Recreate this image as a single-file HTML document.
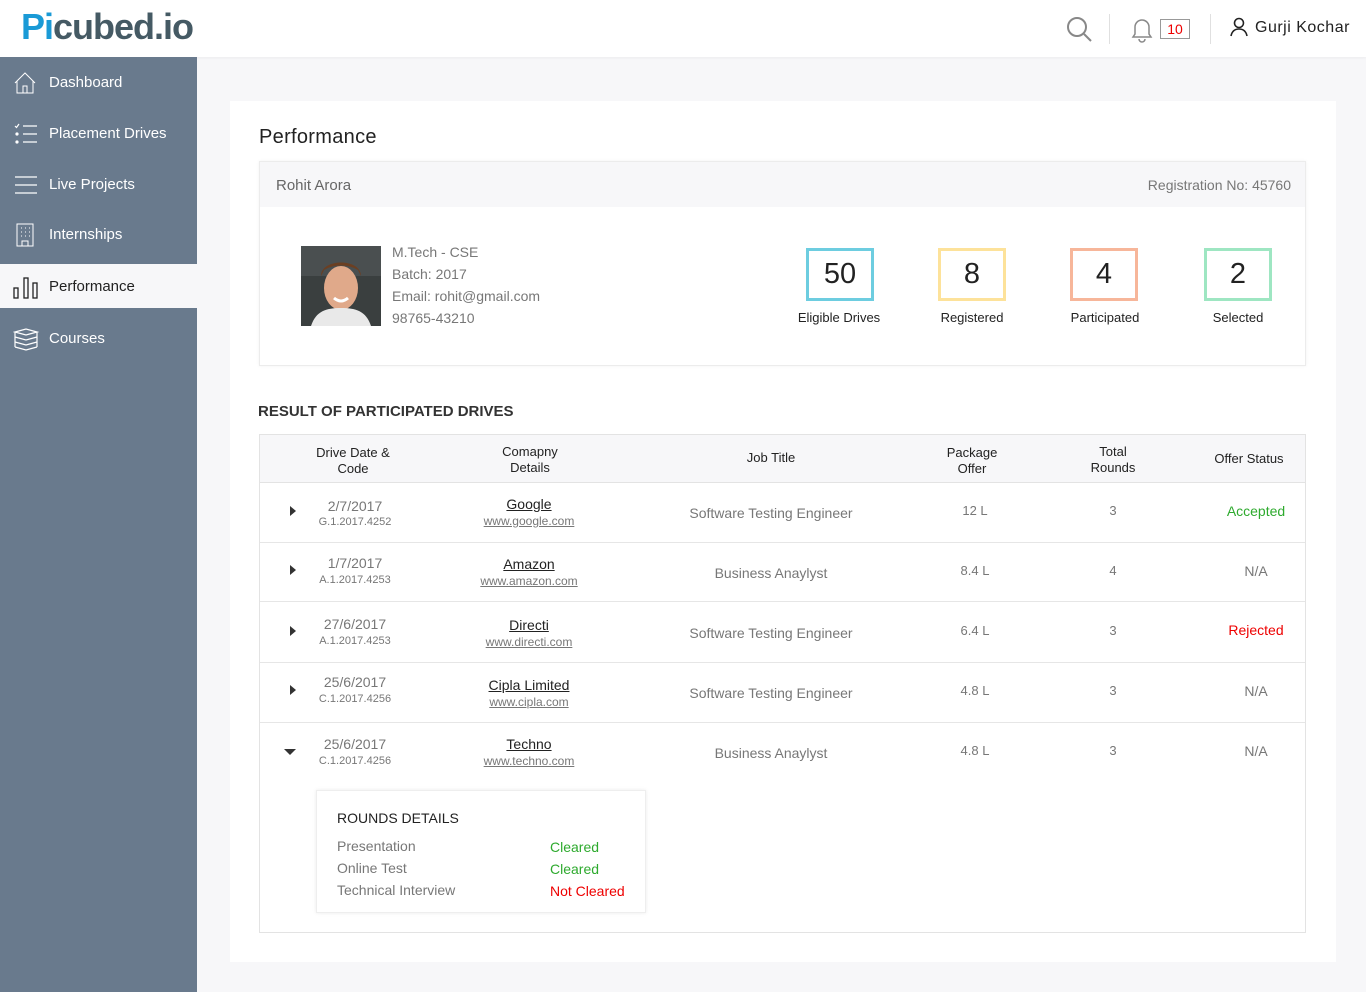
<!DOCTYPE html>
<html><head><meta charset="utf-8"><style>
*{box-sizing:border-box;margin:0;padding:0}
body{width:1366px;height:992px;background:#f7f7f9;font-family:"Liberation Sans",sans-serif;position:relative;overflow:hidden;color:#222}
.top{position:absolute;left:0;top:0;width:1366px;height:57px;background:#fff;box-shadow:0 1px 3px rgba(0,0,0,.05)}
.logo{position:absolute;left:21px;top:6px;font-size:36px;font-weight:bold;color:#455a64;letter-spacing:-1px}
.logo b{color:#1a9ad6}
.side{position:absolute;left:0;top:57px;width:197px;height:935px;background:#697a8d}
.nav{position:absolute;left:0;width:197px;height:44px;color:#fff;font-size:15px;line-height:46px;padding-left:49px}
.nav svg{position:absolute;left:13px;top:11px}
.nav.act{background:#f7f7f9;color:#222}
.card{position:absolute;left:230px;top:101px;width:1106px;height:861px;background:#fff}
.abs{position:absolute}
.stat{position:absolute;width:68px;height:53px;border:3px solid;text-align:center;font-size:29px;line-height:47px;color:#222}
.lbl{position:absolute;font-size:13px;text-align:center;width:120px}
.g{color:#777}
.tbl{position:absolute;left:259px;top:434px;width:1047px;height:499px;border:1px solid #e3e3e3}
.th{position:absolute;top:0;height:48px;width:1045px;background:#f7f7f9;border-bottom:1px solid #e3e3e3}
.c{position:absolute;text-align:center;font-size:13px}
.row{position:absolute;left:0;width:1045px;border-bottom:1px solid #e6e6e6}
.tri{position:absolute;left:30px;width:0;height:0;border-top:5px solid transparent;border-bottom:5px solid transparent;border-left:6px solid #333}
.u{text-decoration:underline}
.lk{font-size:12px !important}
</style></head><body>
<div class="top">
<div class="logo"><b>Pi</b>cubed.io</div>
<svg class="abs" style="left:1065px;top:15px" width="28" height="28" viewBox="0 0 28 28" fill="none" stroke="#888" stroke-width="2"><circle cx="12" cy="12" r="9"/><path d="M19 19l7 7"/></svg>
<div class="abs" style="left:1109px;top:14px;width:1px;height:30px;background:#e0e0e0"></div>
<svg class="abs" style="left:1129px;top:15px" width="26" height="28" viewBox="0 0 26 28" fill="none" stroke="#888" stroke-width="1.5"><path d="M4 22h18l-2-3v-7a7 7 0 00-14 0v7z"/><path d="M10 24a3 3 0 006 0"/></svg>
<div class="abs" style="left:1160px;top:19px;width:30px;height:20px;border:1px solid #999;color:#e00;font-size:14px;text-align:center;line-height:18px">10</div>
<div class="abs" style="left:1210px;top:14px;width:1px;height:30px;background:#e0e0e0"></div>
<svg class="abs" style="left:1229px;top:17px" width="20" height="20" viewBox="0 0 20 20" fill="none" stroke="#222" stroke-width="1.6"><circle cx="10" cy="6" r="4.5"/><path d="M2 19c1-5 4-7 8-7s7 2 8 7"/></svg>
<div class="abs" style="left:1255px;top:19px;font-size:16px;letter-spacing:.5px">Gurji Kochar</div>
</div>
<div class="side">
<div class="nav" style="top:3px"><svg width="24" height="24" viewBox="0 0 24 24" fill="none" stroke="#fff" stroke-width="1"><path d="M2 12L12 2l10 10M4 10v12h16V10M10 22v-7h4v7"/></svg>Dashboard</div>
<div class="nav" style="top:54px"><svg width="26" height="24" viewBox="0 0 26 24" fill="none" stroke="#fff" stroke-width="1.2"><path d="M2 4l1.5 1.5L6 2M10 4h14M10 12h14M10 20h14"/><circle cx="4" cy="12" r="1" fill="#fff"/><circle cx="4" cy="20" r="1" fill="#fff"/></svg>Placement Drives</div>
<div class="nav" style="top:105px"><svg width="26" height="24" viewBox="0 0 26 24" fill="none" stroke="#fff" stroke-width="1.2"><path d="M2 4h22M2 12h22M2 20h22"/></svg>Live Projects</div>
<div class="nav" style="top:155px"><svg width="24" height="24" viewBox="0 0 24 24" fill="none" stroke="#fff" stroke-width="1"><rect x="4" y="1" width="16" height="22"/><path d="M9 23v-5h6v5M8 5h1M12 5h1M16 5h1M8 9h1M12 9h1M16 9h1M8 13h1M12 13h1M16 13h1"/></svg>Internships</div>
<div class="nav act" style="top:207px"><svg width="26" height="24" viewBox="0 0 26 24" fill="none" stroke="#222" stroke-width="1.3"><rect x="1" y="13" width="4" height="10"/><rect x="11" y="3" width="4" height="20"/><rect x="20" y="8" width="4" height="15"/></svg>Performance</div>
<div class="nav" style="top:259px"><svg width="26" height="24" viewBox="0 0 26 24" fill="none" stroke="#fff" stroke-width="1.2"><path d="M2 5l11-3 11 3-11 3zM2 10l11 3 11-3M2 15l11 3 11-3M2 20l11 3 11-3M2 5v15M24 5v15"/></svg>Courses</div>
</div>
<div class="card"></div>
<div class="abs" style="left:259px;top:126px;font-size:20px;letter-spacing:.3px">Performance</div>
<div class="abs" style="left:259px;top:161px;width:1047px;height:205px;border:1px solid #ececec;box-shadow:0 0 3px rgba(0,0,0,.06)">
<div style="height:45px;background:#f7f7f9;position:relative">
<div class="abs g" style="left:16px;top:15px;font-size:15px;color:#666">Rohit Arora</div>
<div class="abs g" style="right:14px;top:15px;font-size:14px">Registration No: 45760</div></div>
</div>
<svg class="abs" style="left:301px;top:246px" width="80" height="80" viewBox="0 0 80 80"><rect width="80" height="80" fill="#3a3f3f"/><rect x="0" y="0" width="80" height="30" fill="#4a4f50"/><ellipse cx="40" cy="42" rx="17" ry="22" fill="#e0a98a"/><path d="M20 30c0-18 40-18 40 0l-3-6c-10-6-24-6-34 0z" fill="#6b3f22"/><path d="M10 80c5-15 15-18 30-18s25 3 30 18z" fill="#e9e9e9"/><path d="M33 52q7 6 14 0" stroke="#fff" stroke-width="3" fill="none"/></svg>
<div class="abs g" style="left:392px;top:241px;font-size:14px;line-height:22px">M.Tech - CSE<br>Batch: 2017<br>Email: rohit@gmail.com<br>98765-43210</div>
<div class="stat" style="left:806px;top:248px;border-color:#6dcde0">50</div>
<div class="stat" style="left:938px;top:248px;border-color:#fde29a">8</div>
<div class="stat" style="left:1070px;top:248px;border-color:#f7b69a">4</div>
<div class="stat" style="left:1204px;top:248px;border-color:#9ee6c2">2</div>
<div class="lbl" style="left:779px;top:310px">Eligible Drives</div>
<div class="lbl" style="left:912px;top:310px">Registered</div>
<div class="lbl" style="left:1045px;top:310px">Participated</div>
<div class="lbl" style="left:1178px;top:310px">Selected</div>
<div class="abs" style="left:258px;top:403px;font-size:15px;font-weight:bold;color:#333">RESULT OF PARTICIPATED DRIVES</div>
<div class="tbl">
<div class="th">
<div class="c" style="left:33px;width:120px;top:10px;line-height:16px">Drive Date &amp;<br>Code</div>
<div class="c" style="left:210px;width:120px;top:9px;line-height:16px">Comapny<br>Details</div>
<div class="c" style="left:411px;width:200px;top:15px">Job Title</div>
<div class="c" style="left:652px;width:120px;top:10px;line-height:16px">Package<br>Offer</div>
<div class="c" style="left:793px;width:120px;top:9px;line-height:16px">Total<br>Rounds</div>
<div class="c" style="left:929px;width:120px;top:16px">Offer Status</div>
</div>
<div class="row" style="top:48px;height:60px"><div class="tri" style="top:23px"></div>
<div class="c g" style="left:35px;width:120px;top:15px;font-size:14px">2/7/2017</div><div class="c g" style="left:35px;width:120px;top:33px;font-size:11px">G.1.2017.4252</div>
<div class="c u" style="left:209px;width:120px;top:13px;font-size:14px">Google</div><div class="c g u lk" style="left:199px;width:140px;top:31px">www.google.com</div>
<div class="c g" style="left:411px;width:200px;top:22px;font-size:14px">Software Testing Engineer</div>
<div class="c g" style="left:655px;width:120px;top:20px">12 L</div><div class="c g" style="left:793px;width:120px;top:20px">3</div>
<div class="c" style="left:936px;width:120px;top:20px;font-size:14px;color:#2eaa2e">Accepted</div></div>
<div class="row" style="top:108px;height:59px"><div class="tri" style="top:22px"></div>
<div class="c g" style="left:35px;width:120px;top:12px;font-size:14px">1/7/2017</div><div class="c g" style="left:35px;width:120px;top:31px;font-size:11px">A.1.2017.4253</div>
<div class="c u" style="left:209px;width:120px;top:13px;font-size:14px">Amazon</div><div class="c g u lk" style="left:199px;width:140px;top:31px">www.amazon.com</div>
<div class="c g" style="left:411px;width:200px;top:22px;font-size:14px">Business Anaylyst</div>
<div class="c g" style="left:655px;width:120px;top:20px">8.4 L</div><div class="c g" style="left:793px;width:120px;top:20px">4</div>
<div class="c g" style="left:936px;width:120px;top:20px;font-size:14px">N/A</div></div>
<div class="row" style="top:167px;height:61px"><div class="tri" style="top:24px"></div>
<div class="c g" style="left:35px;width:120px;top:14px;font-size:14px">27/6/2017</div><div class="c g" style="left:35px;width:120px;top:33px;font-size:11px">A.1.2017.4253</div>
<div class="c u" style="left:209px;width:120px;top:15px;font-size:14px">Directi</div><div class="c g u lk" style="left:199px;width:140px;top:33px">www.directi.com</div>
<div class="c g" style="left:411px;width:200px;top:23px;font-size:14px">Software Testing Engineer</div>
<div class="c g" style="left:655px;width:120px;top:21px">6.4 L</div><div class="c g" style="left:793px;width:120px;top:21px">3</div>
<div class="c" style="left:936px;width:120px;top:20px;font-size:14px;color:#e00">Rejected</div></div>
<div class="row" style="top:228px;height:60px"><div class="tri" style="top:22px"></div>
<div class="c g" style="left:35px;width:120px;top:11px;font-size:14px">25/6/2017</div><div class="c g" style="left:35px;width:120px;top:30px;font-size:11px">C.1.2017.4256</div>
<div class="c u" style="left:209px;width:120px;top:14px;font-size:14px">Cipla Limited</div><div class="c g u lk" style="left:199px;width:140px;top:32px">www.cipla.com</div>
<div class="c g" style="left:411px;width:200px;top:22px;font-size:14px">Software Testing Engineer</div>
<div class="c g" style="left:655px;width:120px;top:20px">4.8 L</div><div class="c g" style="left:793px;width:120px;top:20px">3</div>
<div class="c g" style="left:936px;width:120px;top:20px;font-size:14px">N/A</div></div>
<div style="position:absolute;left:24px;top:314px;width:0;height:0;border-left:6px solid transparent;border-right:6px solid transparent;border-top:6px solid #333"></div>
<div class="c g" style="left:35px;width:120px;top:301px;font-size:14px">25/6/2017</div><div class="c g" style="left:35px;width:120px;top:320px;font-size:11px">C.1.2017.4256</div>
<div class="c u" style="left:209px;width:120px;top:301px;font-size:14px">Techno</div><div class="c g u lk" style="left:199px;width:140px;top:319px">www.techno.com</div>
<div class="c g" style="left:411px;width:200px;top:310px;font-size:14px">Business Anaylyst</div>
<div class="c g" style="left:655px;width:120px;top:308px">4.8 L</div><div class="c g" style="left:793px;width:120px;top:308px">3</div>
<div class="c g" style="left:936px;width:120px;top:308px;font-size:14px">N/A</div>
<div class="abs" style="left:56px;top:355px;width:330px;height:123px;background:#fff;border:1px solid #eee;box-shadow:0 0 4px rgba(0,0,0,.08);font-size:14px">
<div class="abs" style="left:20px;top:19px;color:#222">ROUNDS DETAILS</div>
<div class="abs g" style="left:20px;top:44px;line-height:22px">Presentation<br>Online Test<br>Technical Interview</div>
<div class="abs" style="left:233px;top:45px;line-height:22px;color:#2eaa2e">Cleared<br>Cleared<br><span style="color:#e00">Not Cleared</span></div>
</div>
</div>
</body></html>
